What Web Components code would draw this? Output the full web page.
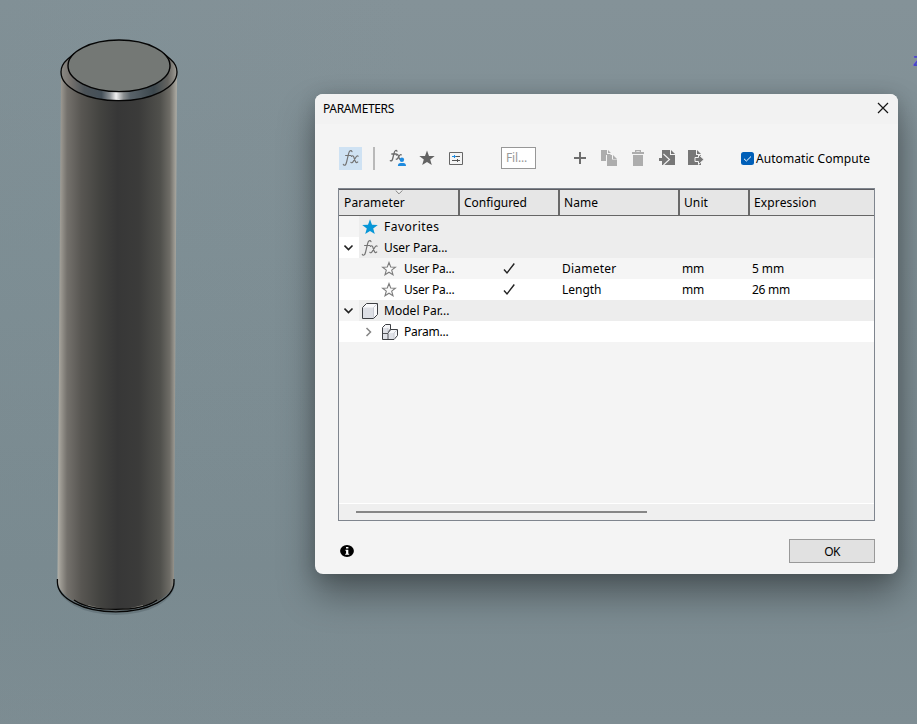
<!DOCTYPE html>
<html lang="en">
<head>
<meta charset="utf-8">
<title>Parameters</title>
<style>
html,body{margin:0;width:917px;height:724px;overflow:hidden}
body{font:12px/21px "Noto Sans","Open Sans",sans-serif;color:#000}
</style>
</head>
<body>
<model-viewport><parameters-dialog></parameters-dialog></model-viewport>
<script>
const define = (name, html, setup) => customElements.define(name, class extends HTMLElement {
  constructor() { super(); this.attachShadow({mode: 'open'}).innerHTML = html; }
  connectedCallback() { if (setup) setup(this, this.shadowRoot); }
});

/* Text whose tracking is adjusted to the width given in "w". */
define('ui-text', `<style>:host{display:block;white-space:nowrap;flex:none}span{display:inline-block}</style><span></span>`, (el, root) => {
  const s = root.querySelector('span');
  s.textContent = el.getAttribute('text');
  const w = +el.getAttribute('w');
  const fit = () => {
    if (!w) return;
    s.style.letterSpacing = '0';
    const d = (w - s.getBoundingClientRect().width) / s.textContent.length;
    s.style.letterSpacing = d.toFixed(3) + 'px';
  };
  requestAnimationFrame(fit);
  fit();
});

const icons = {
  fx: ['0 0 18 18', `<g fill="none" stroke="#737373" stroke-width="1.15" stroke-linecap="round"><path d="M10 2.6Q9.6 1.4 8.5 1.6Q7.2 1.8 6.6 4.6L4.6 13Q3.9 16.2 2.5 16.2Q1.5 16.2 1.3 15.4M3.6 6.5H9"/><path d="M9.4 7.5Q10.6 6 11.6 7.6L13.4 12.6Q14.2 14.4 15.7 13M16.1 7.2Q15.2 6.2 13.9 8.2L11.3 12.4Q10 14.6 8.9 13.3"/></g>`],
  fxuser: ['0 0 18 18', `<g fill="none" stroke="#6a6a6a" stroke-width="1.3" stroke-linecap="round"><path d="M8 2.2Q7.6 1.2 6.6 1.5Q5.5 2 5 4.3L3.6 10Q3 12.4 1.3 11.7M2.8 5H7.3"/><path d="M7.4 6Q8.6 4.8 9.1 6.3L10.2 9.2Q10.6 10.3 11 10M12.2 5.8Q11.4 5.2 10.4 6.7L8.6 9.5Q7.9 10.7 7.2 10.1"/></g><circle cx="12.9" cy="10.8" r="2.2" fill="#1e8ade"/><path d="M8.9 17Q8.9 14.2 11.7 14H14.3Q17 14.2 17 17Z" fill="#1e8ade"/>`],
  star: ['0 0 16 16', `<path fill="#636363" d="M8 .6L10 5.9L15.7 6.1L11.2 9.6L12.8 15.1L8 11.9L3.2 15.1L4.8 9.6L.3 6.1L6 5.9Z"/>`],
  bluestar: ['0 0 16 16', `<path fill="#0696d7" d="M8 .3L10 5.7L15.8 5.9L11.2 9.5L12.8 15.1L8 11.9L3.2 15.1L4.8 9.5L.2 5.9L6 5.7Z"/>`],
  outline: ['0 0 16 16', `<path fill="#fafafa" stroke="#7c7c7c" stroke-width="1.1" d="M8 1.5L9.7 6L14.4 6.2L10.7 9.1L12 13.8L8 11.2L4 13.8L5.3 9.1L1.6 6.2L6.3 6Z"/>`],
  panel: ['0 0 14 13', `<path fill="none" stroke="#666" d="M.5.5H13.5V12.5H.5Z"/><path stroke="#555" d="M3 4.5H11M3 8.5H11M8.5 7V10"/><path stroke="#1e8ade" d="M3 4.5H7M5.5 3V6"/>`],
  plus: ['0 0 12 12', `<path stroke="#6d6d6d" stroke-width="2" d="M0 6H12M6 0V12"/>`],
  copy: ['0 0 16 16', `<path fill="#adadad" d="M0 0H6V4H9.5V5H5V11H0ZM7 0L10 3H7ZM6 5H11V9.5H16V16H6ZM12 5L16 9H12Z"/>`],
  trash: ['0 0 12 16', `<path fill="#adadad" d="M3 0H9V2H12V4H0V2H3ZM4.3 1.2V2H7.7V1.2ZM1 5H11V16H1Z" fill-rule="evenodd"/>`],
  importer: ['0 0 16 16', `<path fill="#777" d="M3 0H11V5H16V15H3ZM12 0L16 4H12Z"/><path d="M4.5 4L10.5 9.5L4.5 15" fill="none" stroke="#f4f4f4" stroke-width="1.1"/><path fill="#777" d="M0 8H4V5L8.5 9.5L4 14V11H0Z"/>`],
  exporter: ['0 0 16 16', `<path fill="#777" d="M0 0H8V5H13V15H0ZM9 0L13 4H9Z"/><path fill="#777" stroke="#f4f4f4" d="M7 7.5H10.5V4.4L16 9.5L10.5 14.6V11.5H7Z"/>`],
  close: ['0 0 12 12', `<path stroke="#151515" stroke-width="1.2" d="M1 1L11 11M11 1L1 11"/>`],
  check: ['0 0 14 14', `<path fill="none" stroke="#222" stroke-width="1.4" d="M2 7.5L5 11L12.3 1.5"/>`],
  down: ['0 0 10 10', `<path fill="none" stroke="#222" stroke-width="1.6" d="M.5 2.5L4.5 6.5L8.5 2.5"/>`],
  right: ['0 0 10 10', `<path fill="none" stroke="#858585" stroke-width="1.5" d="M2.5 1L6.5 5L2.5 9"/>`],
  cube: ['0 0 16 16', `<path fill="#f9f9fb" stroke="#3d3f43" stroke-linejoin="round" d="M.5 4.5L4.5.5H15.5V11.5L11.5 15.5H.5Z"/><path fill="#dddfe5" d="M1 4.5H11.5V15H1Z"/><path stroke="#bfc2ca" stroke-width=".8" d="M11.5 4.5L15 1M11.5 4.5V15"/>`],
  component: ['0 0 16 16', `<path fill="#f4f5f8" stroke="#3d3f43" stroke-linejoin="round" d="M.5 3.5L3.5.5H8.5V5.5H15.5V11.5L12 15.5H.5Z"/><path fill="#dfe1e7" d="M1 4H6V9H12V15H1Z"/><path fill="none" stroke="#44464a" stroke-width=".9" d="M8.5 5L6 8M.5 9.5H6V15.5M6 9L8.5 6"/><path fill="none" stroke="#bfc2ca" stroke-width=".8" d="M12 9L15 6M12 9V15M6 4V8"/>`],
  info: ['0 0 14 12', `<ellipse cx="7" cy="6" rx="6.9" ry="6"/><path fill="#fff" d="M6 2H8.4V3.6H6ZM5.4 4.7H8.3V8.7H9.2V9.8H5.2V8.7H6.1V5.8H5.4Z"/>`],
  sort: ['0 0 8 5', `<path fill="#f3f3f3" stroke="#808080" d="M.7 .5L4 3.8L7.3 .5"/>`],
  tick: ['0 0 13 13', `<rect width="13" height="13" rx="2.5" fill="#005fb8"/><path fill="none" stroke="#fff" stroke-width="1" d="M3 6.8L5.4 9L10 4.5"/>`]
};
define('ui-icon', `<style>:host{display:block;flex:none}svg{display:block}</style><div></div>`, (el, root) => {
  const [box, art] = icons[el.getAttribute('name')];
  const [, , w, h] = box.split(' ');
  root.querySelector('div').innerHTML = `<svg width="${w}" height="${h}" viewBox="${box}">${art}</svg>`;
});

define('model-viewport', `<style>
:host{display:block;position:relative;width:917px;height:724px;overflow:hidden;
background:linear-gradient(90deg,rgba(120,138,144,.25),transparent 45%),linear-gradient(180deg,#849298 0,#7f8f95 35%,#7a8a90 78%,#7e8d93 100%)}
svg{position:absolute;left:0;top:0}
.axis{position:absolute;left:913px;top:50px;font:bold 15px/21px "Liberation Sans",sans-serif;color:#4848cd}
</style>
<svg width="300" height="724" viewBox="0 0 300 724">
<defs>
<linearGradient id="body"><stop offset="0" stop-color="#b4b2aa"/><stop offset=".03" stop-color="#9a9790"/><stop offset=".08" stop-color="#74716c"/><stop offset=".2" stop-color="#585652"/><stop offset=".36" stop-color="#434340"/><stop offset=".5" stop-color="#373737"/><stop offset=".68" stop-color="#3b3b3a"/><stop offset=".86" stop-color="#50504c"/><stop offset=".94" stop-color="#6f6d67"/><stop offset="1" stop-color="#b0aea6"/></linearGradient>
<linearGradient id="bevel"><stop offset="0" stop-color="#8b8984"/><stop offset=".08" stop-color="#77736f"/><stop offset=".2" stop-color="#4c5358"/><stop offset=".35" stop-color="#455059"/><stop offset=".42" stop-color="#8b9094"/><stop offset=".475" stop-color="#f2f2f2"/><stop offset=".54" stop-color="#8b8f91"/><stop offset=".6" stop-color="#59636a"/><stop offset=".8" stop-color="#3d484e"/><stop offset=".92" stop-color="#64635f"/><stop offset="1" stop-color="#a19e97"/></linearGradient>
</defs>
<path d="M57 583A59 32 0 0 0 175 583Z" fill="#637278" opacity=".75"/>
<path d="M61 72L57.5 580A58.2 30.5 0 0 0 174 580L177 72Z" fill="url(#body)"/>
<path d="M57.4 579V582A58.3 29.8 0 0 0 174 582V579" fill="none" stroke="#050505" stroke-width="1.3"/>
<path d="M88 605.5Q116 614 143 605.5" fill="none" stroke="#8c8a83" stroke-width="1.2"/>
<path d="M74 600C92 612.5 140 612.5 157 600" fill="none" stroke="#050505" stroke-width="1.1"/>
<path d="M74 53.7L67.5 59.3Q61 65 61 72A58 28.7 0 0 0 177 72Q177 65 170.5 59.3L164 53.7Z" fill="url(#bevel)" stroke="#050505" stroke-width="1.3" stroke-linejoin="round"/>
<ellipse cx="119" cy="65.8" rx="51" ry="25.8" fill="#747875" stroke="#050505" stroke-width="1.4"/>
</svg>
<span class="axis">Z</span><slot></slot>`);

define('tool-bar', `<style>
:host{display:flex;align-items:center;height:24px;padding-left:24px}
.on{width:23px;height:23px;background:#cfe2f3;display:grid;place-items:center}
.sep{width:2px;height:23px;background:#b9b9b9;margin-left:11px}
.filter{box-sizing:border-box;width:35px;height:22px;border:1px solid #979797;background:#fff;color:#999;padding-left:4px;line-height:20px;margin-left:38px}
</style>
<div class="on"><ui-icon name="fx"></ui-icon></div><div class="sep"></div>
<ui-icon name="fxuser" style="margin-left:14px"></ui-icon>
<ui-icon name="star" style="margin-left:12px"></ui-icon>
<ui-icon name="panel" style="margin-left:14px"></ui-icon>
<div class="filter"><ui-text text="Fil..." w="21"></ui-text></div>
<ui-icon name="plus" style="margin-left:38px"></ui-icon>
<ui-icon name="copy" style="margin-left:15px"></ui-icon>
<ui-icon name="trash" style="margin-left:15px"></ui-icon>
<ui-icon name="importer" style="margin-left:15px"></ui-icon>
<ui-icon name="exporter" style="margin-left:13px"></ui-icon>
<ui-icon name="tick" style="margin-left:37px"></ui-icon>
<ui-text text="Automatic Compute" w="114" style="margin-left:2px"></ui-text>`);

define('param-head', `<style>
:host{display:flex;height:25px;background:#e6e6e6;border-top:1px solid #5d5d62;border-bottom:1px solid #666;line-height:25px;position:relative}
div{box-sizing:border-box;padding-left:4px;border-right:2px solid #696969}
div:last-of-type{border:0}
.sort{position:absolute;left:56px;top:0}
</style>
<div style="width:121px;padding-left:5px"><ui-text text="Parameter" w="61"></ui-text></div>
<div style="width:100px"><ui-text text="Configured" w="63"></ui-text></div>
<div style="width:120px"><ui-text text="Name" w="34"></ui-text></div>
<div style="width:70px"><ui-text text="Unit" w="24"></ui-text></div>
<div><ui-text text="Expression" w="62.5"></ui-text></div>
<ui-icon class="sort" name="sort"></ui-icon>`);

define('param-row', `<style>
:host{display:grid;grid-template-columns:120px 100px 120px 70px 1fr;height:21px;align-items:center;background:var(--row,#f5f5f5)}
:host([group]){background:linear-gradient(90deg,var(--row,#f5f5f5) 20px,#ededed 20px)}
.name{display:flex;align-items:center;height:21px}
.toggle{width:20px;display:grid;place-items:center}
:host([child]) .name{padding-left:20px}
.ic{width:25px;padding-left:3px;box-sizing:border-box}
:host([icon=fx]) .ic,:host([icon=outline]) .ic{padding-left:2px}
.mark{display:grid;justify-items:center}
.pad{padding-left:3px}
</style>
<div class="name"><div class="toggle"></div><div class="ic"></div><div class="label"></div></div>
<div class="mark"></div><div class="pad a"></div><div class="pad b"></div><div class="pad c"></div>`, (el, root) => {
  const a = n => el.getAttribute(n);
  const put = (sel, html) => root.querySelector(sel).innerHTML = html;
  if (a('toggle')) put('.toggle', `<ui-icon name="${a('toggle')}"></ui-icon>`);
  put('.ic', `<ui-icon name="${a('icon')}"></ui-icon>`);
  put('.label', `<ui-text text="${a('label')}" w="${a('w')}"></ui-text>`);
  if (a('value')) {
    put('.mark', '<ui-icon name="check"></ui-icon>');
    put('.a', `<ui-text text="${a('title-text')}" w="${a('tw')}"></ui-text>`);
    put('.b', '<ui-text text="mm" w="22"></ui-text>');
    put('.c', `<ui-text text="${a('value')}" w="${a('vw')}"></ui-text>`);
  }
});

define('param-table', `<style>
:host{display:flex;flex-direction:column;box-sizing:border-box;width:537px;height:333px;border:1px solid #7f858e;background:#f4f4f4}
.scroll{margin-top:auto;height:16px;border-top:1px solid #fff;background:#efefef;display:flex;align-items:center}
.thumb{width:291px;height:2px;background:#868686;margin-left:17px}
.white{--row:#fff}
</style>
<param-head></param-head>
<param-row group icon="bluestar" label="Favorites" w="55.5"></param-row>
<param-row group class="white" toggle="down" icon="fx" label="User Para..." w="63.5"></param-row>
<param-row child icon="outline" label="User Pa..." w="50.5" title-text="Diameter" tw="54.5" value="5 mm" vw="32"></param-row>
<param-row child class="white" icon="outline" label="User Pa..." w="50.5" title-text="Length" tw="39.5" value="26 mm" vw="38"></param-row>
<param-row group toggle="down" icon="cube" label="Model Par..." w="65.5"></param-row>
<param-row child class="white" toggle="right" icon="component" label="Param..." w="44.5"></param-row>
<div class="scroll"><div class="thumb"></div></div>`);

define('parameters-dialog', `<style>
:host{position:absolute;left:315px;top:94px;width:583px;height:480px;border-radius:8px;background:#f4f4f4;box-shadow:0 20px 36px rgba(0,0,0,.36),0 2px 18px rgba(0,0,0,.17);display:flex;flex-direction:column}
header{box-sizing:border-box;height:30px;background:#f2f2f2;border-radius:8px 8px 0 0;display:flex;align-items:center;justify-content:space-between;padding:0 9px 2px 8px}
tool-bar{margin-top:22px}
param-table{margin:18px 0 0 23px}
footer{display:flex;align-items:center;justify-content:space-between;padding:18px 23px 0 25px}
.ok{box-sizing:border-box;width:86px;height:24px;border:1px solid #999;background:#e1e1e1;display:flex;justify-content:center;align-items:center}
</style>
<header><ui-text text="PARAMETERS" w="71"></ui-text><ui-icon name="close"></ui-icon></header>
<tool-bar></tool-bar><param-table></param-table>
<footer><ui-icon name="info"></ui-icon><div class="ok"><ui-text text="OK" w="15.5"></ui-text></div></footer>`);
</script>
</body>
</html>
